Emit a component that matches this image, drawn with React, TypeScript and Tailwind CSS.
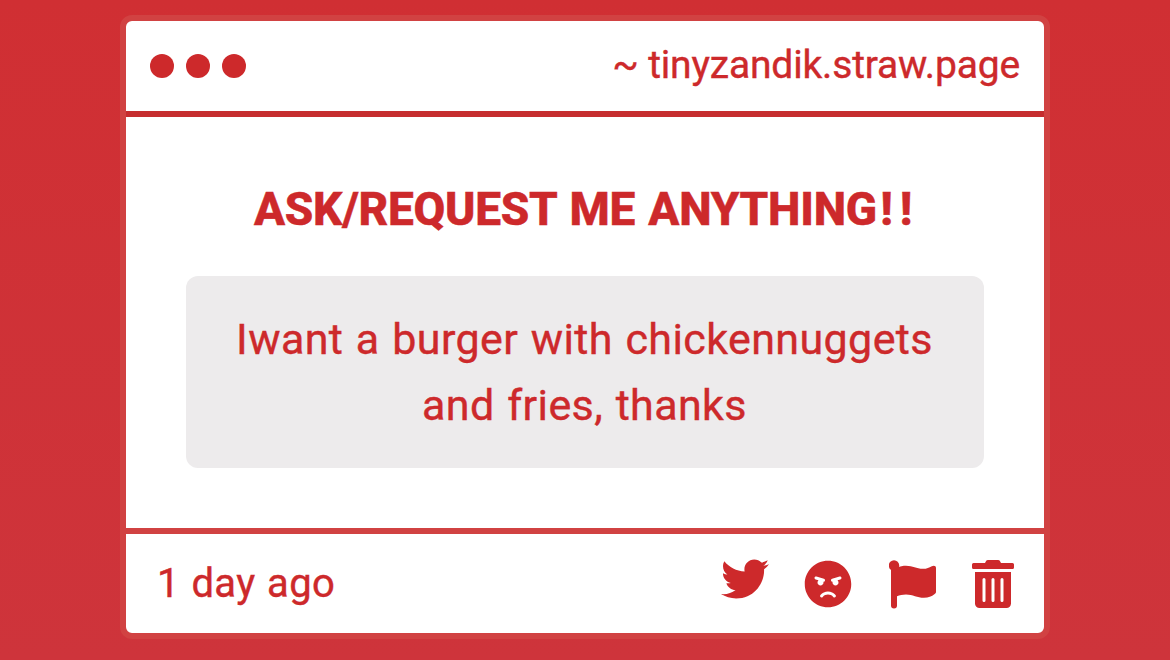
import { FaAngry, FaTwitter } from "react-icons/fa";

function FlagIcon() {
  return (
    <svg viewBox="0 0 48 50" className="h-[50px] w-12" fill="currentColor">
      <circle cx="5" cy="6.500" r="5.200" />
      <path d="M2 6h6v40.500a3 3 0 0 1-6 0z" />
      <path d="M8 8.600C11 7.200 14 6.700 17 6.700c7 0 10 3.100 17 3.100 4 0 6-1.100 8.800-2.600C45 6 47 6.800 47 9v23.800c0 1-.4 1.600-1.300 2.200C42.500 37.600 39.500 38.700 35 38.700c-7 0-11-3.300-18-3.300-3.500 0-6.500.7-9 1.900z" />
    </svg>
  );
}

function TrashIcon() {
  return (
    <svg viewBox="0 0 42 48" className="h-12 w-[42px]" fill="currentColor">
      <path d="M1.500 3H13l.8-1.600A2.500 2.500 0 0 1 16 0h10a2.500 2.500 0 0 1 2.200 1.400L29 3h11.500A1.500 1.500 0 0 1 42 4.500v3A1.500 1.500 0 0 1 40.500 9h-39A1.500 1.500 0 0 1 0 7.500v-3A1.500 1.500 0 0 1 1.500 3z" />
      <path d="M3 12h36v31.500a4.500 4.500 0 0 1-4.500 4.500h-27A4.500 4.500 0 0 1 3 43.500z" />
      <path
        d="M12 19.500v21M21 19.500v21M30 19.500v21"
        stroke="white"
        strokeWidth="3"
        strokeLinecap="round"
      />
    </svg>
  );
}

export default function App() {
  return (
    <div className="h-[660px] w-[1170px] bg-linear-to-b from-[#d02f33] to-[#ce343b] px-[120px] pt-[15px] font-[Roboto,sans-serif] text-[#cd292b]">
      <div className="flex h-[624px] flex-col rounded-xl border-6 border-[#d14242] bg-white">
        <header className="flex h-24 items-center justify-between border-b-6 border-[#c62d2f] px-6">
          <div className="flex gap-3">
            <span className="size-6 rounded-full bg-current" />
            <span className="size-6 rounded-full bg-current" />
            <span className="size-6 rounded-full bg-current" />
          </div>
          <p className="pb-0.5 text-[39px] leading-[48px] tracking-[-0.17px] [-webkit-text-stroke:0.4px]">
            ~ tinyzandik.straw.page
          </p>
        </header>

        <main className="flex flex-1 flex-col items-center px-[60px] pt-[64px]">
          <h1 className="pr-1 text-[46px] leading-[56px] font-extrabold tracking-[-0.25px] [-webkit-text-stroke:0.5px] [word-spacing:2px]">
            ASK/REQUEST ME ANYTHIN<span className="tracking-[3px]">G</span>
            <span className="tracking-[7px]">!</span>!
          </h1>
          <div className="mt-[39px] flex h-48 w-full flex-col items-center justify-center rounded-xl bg-[#edebec] pr-px text-[43px] leading-[66px] tracking-[0.4px] [-webkit-text-stroke:0.4px] [word-spacing:1.5px]">
            <p>Iwant a burger with chickennuggets</p>
            <p>and fries, thanks</p>
          </div>
        </main>

        <footer className="flex h-[105px] items-center justify-between border-t-6 border-[#d14242] pr-[30px] pl-[31px]">
          <p className="text-[40px] leading-[48px] tracking-[0.3px] [-webkit-text-stroke:0.4px] [word-spacing:1.5px]">
            1 day ago
          </p>
          <div className="flex items-center">
            <FaTwitter className="mb-[9px] size-12" />
            <FaAngry className="ml-[35px] size-12" />
            <span className="ml-[37px]">
              <FlagIcon />
            </span>
            <span className="ml-[35px]">
              <TrashIcon />
            </span>
          </div>
        </footer>
      </div>
    </div>
  );
}
